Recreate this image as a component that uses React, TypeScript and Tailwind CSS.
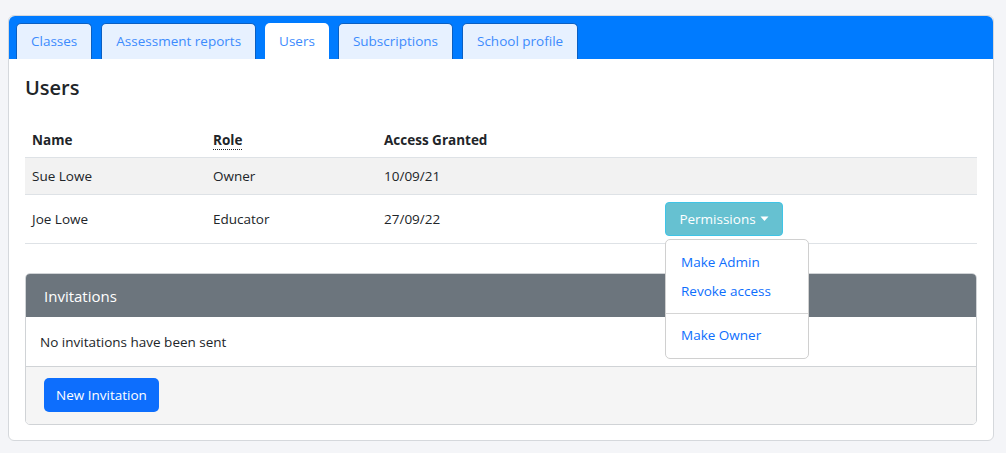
import React from 'react';

const tabs = ['Classes', 'Assessment reports', 'Users', 'Subscriptions', 'School profile'];

const users = [
  { name: 'Sue Lowe', role: 'Owner', date: '10/09/21' },
  { name: 'Joe Lowe', role: 'Educator', date: '27/09/22' },
];

const App: React.FC = () => {
  return (
    <div className="min-h-[453px] bg-[#f4f5f8] pl-2 pr-3 pt-[15px] pb-3 text-[14px] text-[#212529]" style={{ fontFamily: '"Open Sans", "Noto Sans", sans-serif' }}>
      <div className="rounded-md border border-[#d5d8dc] bg-white">
        {/* tab bar */}
        <div className="flex items-end gap-[9px] rounded-t-md bg-[#007bff] px-[7px] pt-[7px]">
          {tabs.map((t) => (
            <div
              key={t}
              className={
                'flex h-[36px] items-center rounded-t-[5px] px-[14px] text-[13.5px] text-[#3d8bfd] ' +
                (t === 'Users' ? 'bg-white' : 'border border-b-0 border-[#0a5fc2] bg-[#e7f1ff]')
              }
            >
              {t}
            </div>
          ))}
        </div>

        <div className="px-4 pt-[14px] pb-[15px]">
          <h4 className="text-[20px] font-semibold leading-[30px] text-[#212529]">Users</h4>

          <table className="mt-[27px] w-full border-collapse text-left text-[13.5px]">
            <thead>
              <tr className="border-b border-[#dee2e6]">
                <th className="w-[181px] px-[7px] pb-[7px] font-bold">Name</th>
                <th className="w-[171px] px-[7px] pb-[7px] font-bold">
                  <span className="border-b border-dotted border-[#212529]">Role</span>
                </th>
                <th className="px-[7px] pb-[7px] font-bold">Access Granted</th>
                <th className="w-[312px]" />
              </tr>
            </thead>
            <tbody>
              <tr className="h-[37px] border-b border-[#dee2e6] bg-[#f2f2f2]">
                <td className="px-[7px]">{users[0].name}</td>
                <td className="px-[7px]">{users[0].role}</td>
                <td className="px-[7px]">{users[0].date}</td>
                <td />
              </tr>
              <tr className="h-[49px] border-b border-[#dee2e6]">
                <td className="px-[7px]">{users[1].name}</td>
                <td className="px-[7px]">{users[1].role}</td>
                <td className="px-[7px]">{users[1].date}</td>
                <td className="relative">
                  <button className="flex h-[34px] w-[118px] items-center justify-center gap-1 rounded border border-[#3fc4e6] bg-[#66c1d1] text-[13.5px] text-white">
                    Permissions
                    <svg width="9" height="6" viewBox="0 0 9 6">
                      <path d="M0.5 0.5 L8.5 0.5 L4.5 5 Z" fill="white" />
                    </svg>
                  </button>
                  <div className="absolute left-0 top-[44px] z-10 w-[144px] rounded-[5px] border border-[#d0d0d0] bg-white py-[8px] text-[13.5px] text-[#0d6efd]">
                    <div className="px-[15px] py-[4px] leading-[21px]">Make Admin</div>
                    <div className="px-[15px] py-[4px] leading-[21px]">Revoke access</div>
                    <div className="my-[7px] border-t border-[#d5d5d5]" />
                    <div className="px-[15px] py-[4px] leading-[21px]">Make Owner</div>
                  </div>
                </td>
              </tr>
            </tbody>
          </table>

          {/* invitations */}
          <div className="mt-[29px] overflow-hidden rounded-[5px] border border-[#d0d3d6]">
            <div className="flex h-[43px] items-center bg-[#6c757d] px-[18px] text-[15px] text-white">Invitations</div>
            <div className="flex h-[50px] items-center border-b border-[#d0d3d6] px-[14px] text-[13.5px]">
              No invitations have been sent
            </div>
            <div className="bg-[#f5f5f5] px-[18px] pt-[11px] pb-[12px]">
              <button className="h-[34px] rounded-[5px] bg-[#0d6efd] px-3 text-[13.5px] text-white">New Invitation</button>
            </div>
          </div>
        </div>
      </div>
    </div>
  );
};

export default App;
